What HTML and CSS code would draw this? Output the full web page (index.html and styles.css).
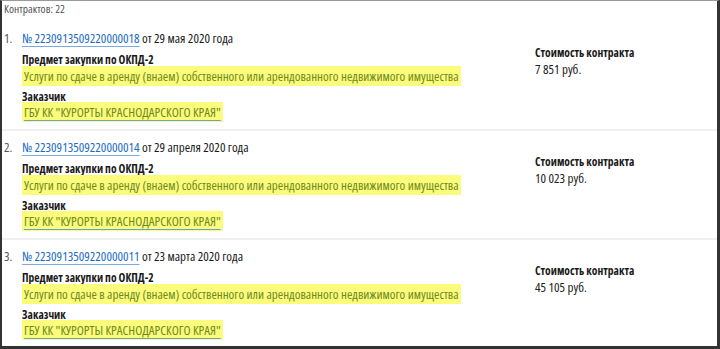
FILE: index.html
```html
<!DOCTYPE html>
<html lang="ru">
<head>
    <meta charset="UTF-8">
    <title>Контракты</title>
    <link rel="stylesheet" href="styles.css">
</head>
<body>
    <div class="page">
        <div class="count">Контрактов: 22</div>

        <!-- Список контрактов -->
        <ol class="contracts">
            <li class="contract">
                <div class="num">1.</div>
                <div class="main">
                    <div class="title"><a href="#" class="reg-num">№ 2230913509220000018</a> от 29 мая 2020 года</div>
                    <div class="label label-subject">Предмет закупки по ОКПД-2</div>
                    <div class="value"><span class="mark">Услуги по сдаче в аренду (внаем) собственного или арендованного недвижимого имущества</span></div>
                    <div class="label label-customer">Заказчик</div>
                    <div class="value"><a href="#" class="mark customer">ГБУ КК "КУРОРТЫ КРАСНОДАРСКОГО КРАЯ"</a></div>
                </div>
                <div class="price">
                    <div class="label">Стоимость контракта</div>
                    <div class="value">7 851 руб.</div>
                </div>
            </li>
            <li class="contract">
                <div class="num">2.</div>
                <div class="main">
                    <div class="title"><a href="#" class="reg-num">№ 2230913509220000014</a> от 29 апреля 2020 года</div>
                    <div class="label label-subject">Предмет закупки по ОКПД-2</div>
                    <div class="value"><span class="mark">Услуги по сдаче в аренду (внаем) собственного или арендованного недвижимого имущества</span></div>
                    <div class="label label-customer">Заказчик</div>
                    <div class="value"><a href="#" class="mark customer">ГБУ КК "КУРОРТЫ КРАСНОДАРСКОГО КРАЯ"</a></div>
                </div>
                <div class="price">
                    <div class="label">Стоимость контракта</div>
                    <div class="value">10 023 руб.</div>
                </div>
            </li>
            <li class="contract">
                <div class="num">3.</div>
                <div class="main">
                    <div class="title"><a href="#" class="reg-num">№ 2230913509220000011</a> от 23 марта 2020 года</div>
                    <div class="label label-subject">Предмет закупки по ОКПД-2</div>
                    <div class="value"><span class="mark">Услуги по сдаче в аренду (внаем) собственного или арендованного недвижимого имущества</span></div>
                    <div class="label label-customer">Заказчик</div>
                    <div class="value"><a href="#" class="mark customer">ГБУ КК "КУРОРТЫ КРАСНОДАРСКОГО КРАЯ"</a></div>
                </div>
                <div class="price">
                    <div class="label">Стоимость контракта</div>
                    <div class="value">45 105 руб.</div>
                </div>
            </li>
        </ol>
    </div>
</body>
</html>
```

FILE: styles.css
```css
/* Сброс */
* {
    margin: 0;
    padding: 0;
    box-sizing: border-box;
}

body {
    font-family: 'Open Sans', 'Liberation Sans', sans-serif;
    font-stretch: 75%;
    color: #1a1a1a;
    background-color: #fff;
}

.page {
    width: 720px;
    height: 349px;
    border-top: 1px solid #9a9a9a;
    border-left: 2px solid #333;
    border-right: 3px solid #333;
    border-bottom: 3px solid #333;
    overflow: hidden;
}

.count {
    font-size: 11.5px;
    line-height: 14px;
    color: #555;
    padding: 1px 2px 0;
}

/* Список */
.contracts {
    list-style: none;
    margin-top: 6px;
}

.contract {
    display: grid;
    grid-template-columns: 18px 513px 1fr;
    padding: 8px 0 9px 2px;
    border-bottom: 2px solid #f0f0f0;
}

.contract:last-child {
    border-bottom: none;
}

.num {
    font-size: 13px;
    line-height: 16px;
    color: #555;
}

.title {
    font-size: 13px;
    line-height: 16px;
}

.reg-num {
    color: #1d6cc4;
    text-decoration: underline;
    text-decoration-color: #7aaae0;
    text-underline-offset: 3px;
}

.label {
    font-size: 11.5px;
    font-weight: bold;
    line-height: 16px;
}

.label-subject {
    margin-top: 6px;
}

.label-customer {
    margin-top: 5px;
    line-height: 15px;
}

.value {
    font-size: 13px;
    line-height: 16px;
}

.mark {
    background-color: #fbfb7c;
    color: #6f8a1c;
    padding: 1px 2px;
}

.customer {
    text-decoration: underline;
    text-decoration-color: #6a9fd8;
    text-underline-offset: 3px;
}

/* Стоимость */
.price {
    padding-top: 15px;
}

.price .value {
    color: #222;
}
```
